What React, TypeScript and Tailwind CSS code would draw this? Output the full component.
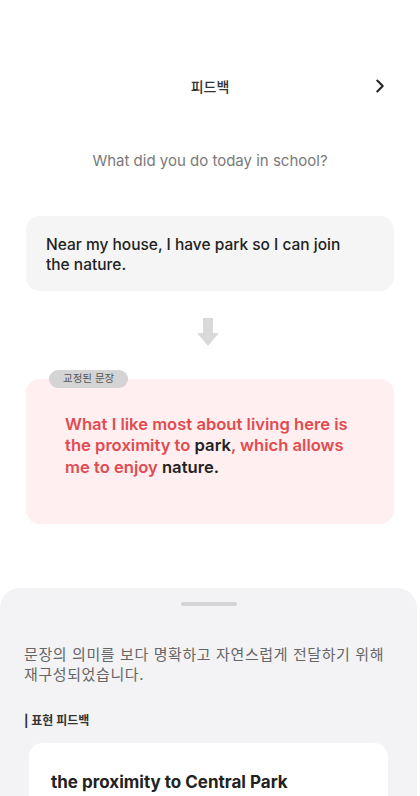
import { ChevronRight } from 'lucide-react';

const font = { fontFamily: "Inter, 'Noto Sans CJK KR', sans-serif" };

function DownArrow() {
  return (
    <svg width="22" height="28" viewBox="0 0 22 28" fill="#d9d9d9">
      <path d="M6 0h10v15h6L11 28 0 15h6z" />
    </svg>
  );
}

export default function App() {
  return (
    <div className="w-[420px] h-[796px] bg-white overflow-hidden flex flex-col" style={font}>
      <div className="relative h-[40px] mt-[66px] flex items-center justify-center">
        <span className="text-[14px] font-medium text-[#333]">피드백</span>
        <ChevronRight size={22} strokeWidth={2.2} className="absolute right-[29px] text-[#222]" />
      </div>

      <p className="mt-[44px] text-center text-[15px] text-[#7a7a7a]">What did you do today in school?</p>

      <div className="mx-[26px] mt-[43px] rounded-[14px] bg-[#f5f5f5] pl-[20px] pr-[40px] pt-[19px] pb-[16px]">
        <p className="text-[15.5px] leading-[20px] text-[#222] font-medium">
          Near my house, I have park so I can join the nature.
        </p>
      </div>

      <div className="flex justify-center mt-[27px] pr-[4px]">
        <DownArrow />
      </div>

      <div className="relative mx-[26px] mt-[33px] h-[145px] rounded-[14px] bg-[#ffeff0] pl-[39px] pr-[40px] pt-[35px]">
        <span className="absolute left-[23px] top-[-9px] h-[18px] px-[14px] rounded-full bg-[#d4d4d4] text-[10.5px] leading-[18px] text-[#555]">
          교정된 문장
        </span>
        <p className="text-[16.6px] leading-[21.5px] font-semibold text-[#e24b50]">
          What I like most about living here is the proximity to <span className="text-[#222]">park</span>, which allows me to enjoy <span className="text-[#222]">nature.</span>
        </p>
      </div>

      <div className="mt-[64px] w-[417px] flex-1 rounded-t-[20px] bg-[#f3f3f5] flex flex-col">
        <div className="mx-auto mt-[14px] h-[4px] w-[56px] rounded-full bg-[#d4d4d6]" />
        <p className="mt-[39px] px-[24px] text-[15px] leading-[20px] tracking-[0.6px] text-[#666]">
          문장의 의미를 보다 명확하고 자연스럽게 전달하기 위해 재구성되었습니다.
        </p>
        <p className="mt-[27px] px-[24px] text-[12px] font-bold text-[#333]">| 표현 피드백</p>
        <div className="mx-[29px] mt-[13px] flex-1 rounded-t-[14px] bg-white px-[22px] pt-[27px]">
          <p className="text-[17px] font-bold text-[#222]">the proximity to Central Park</p>
        </div>
      </div>
    </div>
  );
}
